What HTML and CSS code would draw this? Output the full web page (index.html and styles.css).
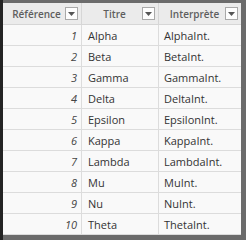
FILE: index.html
```html
<!DOCTYPE html>
<html lang="fr">
<head>
<meta charset="utf-8">
<link rel="stylesheet" href="styles.css">
</head>
<body>
<div class="frame">
  <div class="grid">
    <div class="hcell"><span class="htext">Référence</span><span class="dd"><svg width="7" height="4" viewBox="0 0 7 4"><path d="M0 0H7L3.5 4Z" fill="#555"/></svg></span></div>
    <div class="hcell"><span class="htext">Titre</span><span class="dd"><svg width="7" height="4" viewBox="0 0 7 4"><path d="M0 0H7L3.5 4Z" fill="#555"/></svg></span></div>
    <div class="hcell last"><span class="htext">Interprète</span><span class="dd"><svg width="7" height="4" viewBox="0 0 7 4"><path d="M0 0H7L3.5 4Z" fill="#555"/></svg></span></div>

    <div class="num">1</div><div class="txt">Alpha</div><div class="txt last">AlphaInt.</div>
    <div class="num">2</div><div class="txt">Beta</div><div class="txt last">BetaInt.</div>
    <div class="num">3</div><div class="txt">Gamma</div><div class="txt last">GammaInt.</div>
    <div class="num">4</div><div class="txt">Delta</div><div class="txt last">DeltaInt.</div>
    <div class="num">5</div><div class="txt">Epsilon</div><div class="txt last">EpsilonInt.</div>
    <div class="num">6</div><div class="txt">Kappa</div><div class="txt last">KappaInt.</div>
    <div class="num">7</div><div class="txt">Lambda</div><div class="txt last">LambdaInt.</div>
    <div class="num">8</div><div class="txt">Mu</div><div class="txt last">MuInt.</div>
    <div class="num">9</div><div class="txt">Nu</div><div class="txt last">NuInt.</div>
    <div class="num">10</div><div class="txt">Theta</div><div class="txt last">ThetaInt.</div>
  </div>
</div>
</body>
</html>
```

FILE: styles.css
```css
html, body {
  margin: 0;
  padding: 0;
  width: 246px;
  height: 240px;
  overflow: hidden;
}
body {
  background: #6b6b6b;
  font-family: "Open Sans", "Noto Sans", sans-serif;
  font-size: 11px;
}
.frame {
  height: 240px;
  box-sizing: border-box;
  border-left: 3px solid #232323;
  padding: 3px 5px 5px 0;
}
.grid {
  display: grid;
  grid-template-columns: 79px 77px 82px;
  grid-template-rows: 22px repeat(10, 21px);
  background: #f9f9f9;
}
.hcell {
  display: flex;
  align-items: center;
  background: #ebebeb;
  border-right: 1px solid #d6d6d6;
  border-bottom: 1px solid #d6d6d6;
  padding: 0 3px 0 5px;
  color: #5e5e5e;
  font-weight: 600;
  font-size: 10px;
}
.hcell.last { border-right: none; }
.htext {
  flex: 1;
  text-align: center;
  white-space: nowrap;
}
.dd {
  width: 11px;
  height: 11px;
  border: 1px solid #a9a9a9;
  background: #fdfdfd;
  display: flex;
  align-items: center;
  justify-content: center;
}
.num, .txt {
  display: flex;
  align-items: center;
  border-right: 1px solid #dcdcdc;
  border-bottom: 1px solid #dcdcdc;
  color: #333;
  white-space: nowrap;
}
.num {
  justify-content: flex-end;
  padding-right: 4px;
  font-style: italic;
  color: #444;
}
.txt { padding-left: 6px; }
.txt.last { padding-left: 5px; border-right: none; }
```
